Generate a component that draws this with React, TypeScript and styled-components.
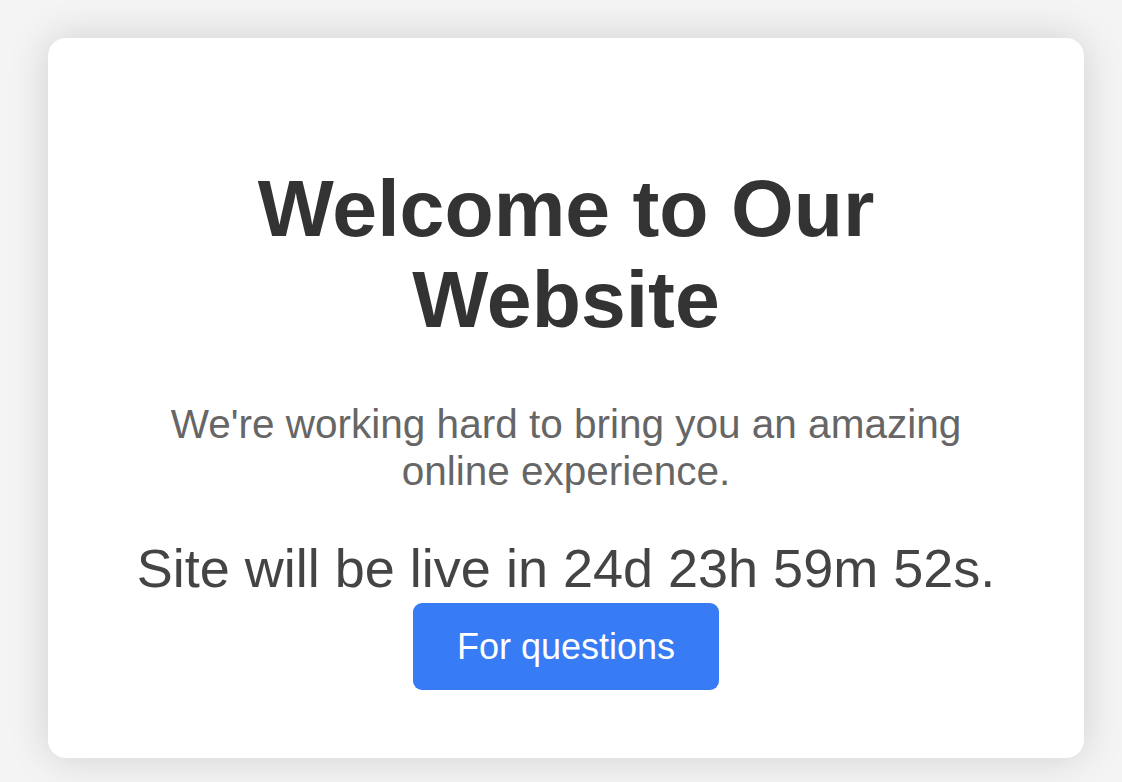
import React from "react";
import styled, { createGlobalStyle } from "styled-components";

const GlobalStyle = createGlobalStyle`
  html, body {
    margin: 0;
    padding: 0;
    background: #f4f4f4;
    font-family: "Liberation Sans", Arial, sans-serif;
  }
  * { box-sizing: border-box; }
`;

const Page = styled.main`
  width: 1122px;
  height: 782px;
  padding: 38px 0 0 48px;
  overflow: hidden;
`;

const Card = styled.section`
  width: 1036px;
  background: #ffffff;
  border-radius: 18px;
  box-shadow: 0 0 40px rgba(0, 0, 0, 0.15);
  padding: 72px 72px 68px;
  display: flex;
  flex-direction: column;
  align-items: center;
  text-align: center;
`;

const Title = styled.h1`
  margin: 53px 0 0;
  font-size: 80.6px;
  line-height: 91px;
  font-weight: 700;
  color: #333333;
`;

const Subtitle = styled.p`
  margin: 56px 0 0;
  font-size: 40.5px;
  line-height: 46.5px;
  color: #666666;
`;

const Countdown = styled.div`
  margin-top: 43px;
  font-size: 54px;
  line-height: 62px;
  color: #444444;
`;

const Button = styled.button`
  margin-top: 4px;
  border: none;
  border-radius: 9px;
  background: #377bf5;
  color: #ffffff;
  font-family: "Liberation Sans", Arial, sans-serif;
  font-size: 36px;
  line-height: 41px;
  padding: 23px 44px;
  cursor: pointer;
`;

export default function App() {
  return (
    <>
      <GlobalStyle />
      <Page>
        <Card>
          <Title>Welcome to Our Website</Title>
          <Subtitle>We're working hard to bring you an amazing online experience.</Subtitle>
          <Countdown>Site will be live in 24d 23h 59m 52s.</Countdown>
          <Button>For questions</Button>
        </Card>
      </Page>
    </>
  );
}
